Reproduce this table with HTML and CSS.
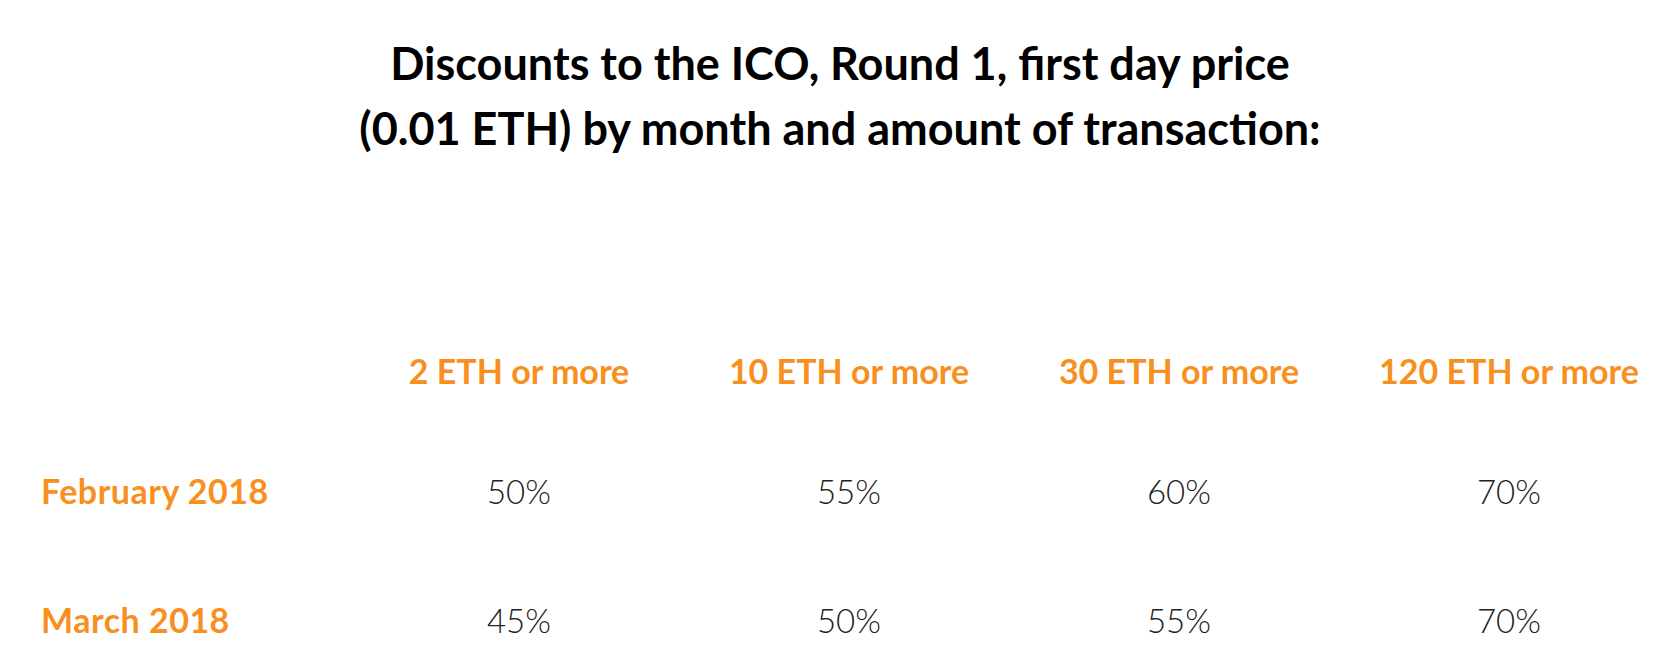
FILE: index.html
```html
<!DOCTYPE html>
<html lang="en">
<head>
<meta charset="utf-8">
<title>Discounts to the ICO</title>
<link rel="stylesheet" href="styles.css">
</head>
<body>
<main class="page">
  <h1 class="title">Discounts to the ICO, Round 1, first day price<br>(0.01 ETH) by month and amount of transaction:</h1>
  <div class="table">
    <div class="row row-head">
      <div class="cell label"></div>
      <div class="cell head">2 ETH or more</div>
      <div class="cell head">10 ETH or more</div>
      <div class="cell head">30 ETH or more</div>
      <div class="cell head">120 ETH or more</div>
    </div>
    <div class="row row-feb">
      <div class="cell label">February 2018</div>
      <div class="cell value">50%</div>
      <div class="cell value">55%</div>
      <div class="cell value">60%</div>
      <div class="cell value">70%</div>
    </div>
    <div class="row row-mar">
      <div class="cell label">March 2018</div>
      <div class="cell value">45%</div>
      <div class="cell value">50%</div>
      <div class="cell value">55%</div>
      <div class="cell value">70%</div>
    </div>
  </div>
</main>
</body>
</html>
```
FILE: styles.css
```css
html, body {
  margin: 0;
  padding: 0;
  background: #ffffff;
}

.page {
  width: 1680px;
  font-family: "Lato", "Liberation Sans", sans-serif;
}

.title {
  margin: 31px 0 0 0;
  text-align: center;
  font-size: 45px;
  line-height: 65px;
  font-weight: 700;
  color: #000000;
}

.table {
  margin-top: 190px;
}

.row {
  display: grid;
  grid-template-columns: 354px repeat(4, 330px);
  height: 40px;
  line-height: 40px;
  font-size: 33px;
}

.row-feb {
  margin-top: 80px;
}

.row-mar {
  margin-top: 89px;
}

.cell {
  white-space: nowrap;
}

.label {
  padding-left: 41px;
  color: #f7901e;
  font-weight: 700;
  font-size: 34px;
  letter-spacing: 0.5px;
}

.head {
  text-align: center;
  color: #f7901e;
  font-weight: 700;
  font-size: 34px;
}

.value {
  text-align: center;
  color: #222222;
  font-weight: 300;
}
```
